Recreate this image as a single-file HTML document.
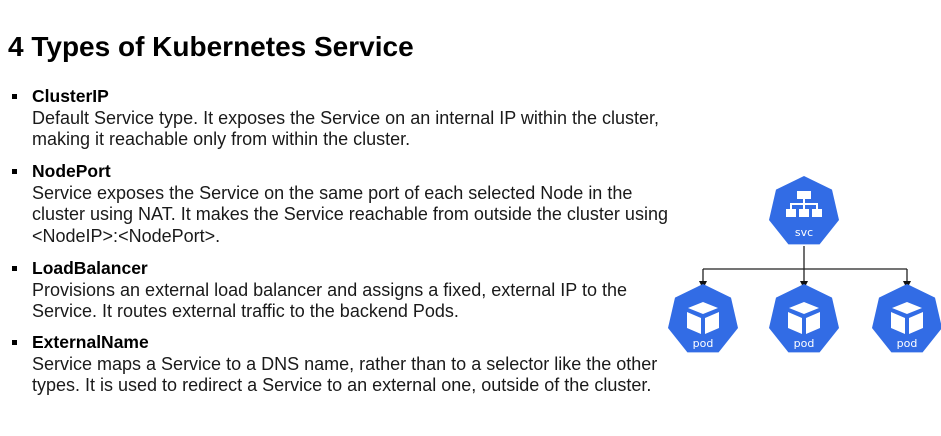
<!DOCTYPE html>
<html><head><meta charset="utf-8"><style>
body{margin:0;width:941px;height:436px;background:#fff;font-family:"Liberation Sans",Arial,sans-serif;color:#111;position:relative;overflow:hidden}
h1{position:absolute;left:8px;top:30px;margin:0;font-size:28px;font-weight:bold;line-height:34px;color:#000}
.it{position:absolute;left:32px;font-size:18px;line-height:21.5px;color:#1a1a1a;white-space:nowrap}
.it b{color:#000;font-size:17.5px}
.it:before{content:"";position:absolute;left:-20px;top:8px;width:5px;height:5px;background:#000}
</style></head><body>
<h1>4 Types of Kubernetes Service</h1>
<div class="it" style="top:86px"><b>ClusterIP</b><br>Default Service type. It exposes the Service on an internal IP within the cluster,<br>making it reachable only from within the cluster.</div>
<div class="it" style="top:161px"><b>NodePort</b><br>Service exposes the Service on the same port of each selected Node in the<br>cluster using NAT. It makes the Service reachable from outside the cluster using<br>&lt;NodeIP&gt;:&lt;NodePort&gt;.</div>
<div class="it" style="top:258px"><b>LoadBalancer</b><br>Provisions an external load balancer and assigns a fixed, external IP to the<br>Service. It routes external traffic to the backend Pods.</div>
<div class="it" style="top:332px"><b>ExternalName</b><br>Service maps a Service to a DNS name, rather than to a selector like the other<br>types. It is used to redirect a Service to an external one, outside of the cluster.</div>
<svg width="941" height="436" style="position:absolute;left:0;top:0">
<defs>
<polygon id="h" points="0,-36 28,-22.4 35,8 15.6,32.4 -15.6,32.4 -35,8 -28,-22.4" fill="#326ce5"/>
<g id="pod"><use href="#h"/>
<polygon points="0,-18 15,-12 0,-6 -15,-12" fill="#fff"/>
<polygon points="-16,-8 -2,-2 -2,14 -16,8" fill="#fff"/>
<polygon points="16,-8 2,-2 2,14 16,8" fill="#fff"/>
<text x="0" y="27" text-anchor="middle" font-size="11" fill="#fff" font-family="DejaVu Sans,sans-serif">pod</text></g>
</defs>
<g stroke="#222" stroke-width="1.3" fill="none">
<path d="M804 246 V269"/><path d="M703 269 H907"/>
<path d="M703 269V282M804 269V282M907 269V282"/>
</g>
<g fill="#111"><path d="M699 281 h8 l-4 8z"/><path d="M800 281 h8 l-4 8z"/><path d="M903 281 h8 l-4 8z"/></g>
<g transform="translate(804,212)"><use href="#h"/>
<g fill="#fff"><rect x="-7" y="-21" width="14" height="8"/><rect x="-1" y="-13" width="2" height="5"/><rect x="-14" y="-9" width="28" height="2"/>
<rect x="-14" y="-8" width="2" height="5"/><rect x="12" y="-8" width="2" height="5"/><rect x="-1" y="-8" width="2" height="5"/>
<rect x="-18" y="-3" width="10" height="8"/><rect x="-5" y="-3" width="10" height="8"/><rect x="8" y="-3" width="10" height="8"/></g>
<text x="0" y="24" text-anchor="middle" font-size="11" fill="#fff" font-family="DejaVu Sans,sans-serif">svc</text></g>
<use href="#pod" transform="translate(703,320)"/>
<use href="#pod" transform="translate(804,320)"/>
<use href="#pod" transform="translate(907,320)"/>
</svg>
</body></html>
